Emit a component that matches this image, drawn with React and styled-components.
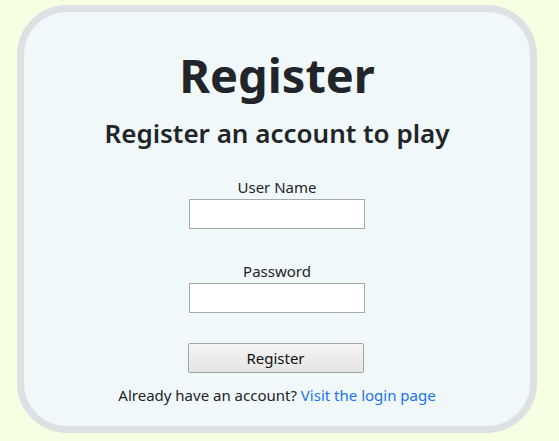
import styled, { createGlobalStyle } from "styled-components";

const GlobalStyle = createGlobalStyle`
  html, body {
    margin: 0;
    background: #f7ffe3;
    font-family: "Noto Sans", "Open Sans", sans-serif;
    color: #212529;
  }
`;

const App = () => {
  return (
    <Page>
      <GlobalStyle />
      <Card>
        <Title>Register</Title>
        <Subtitle>Register an account to play</Subtitle>
        <Form onSubmit={(e) => e.preventDefault()}>
          <Field>
            <Label htmlFor="username">User Name</Label>
            <Input id="username" type="text" />
          </Field>
          <Field>
            <Label htmlFor="password">Password</Label>
            <Input id="password" type="password" />
          </Field>
          <SubmitButton type="submit">Register</SubmitButton>
        </Form>
        <Footer>
          Already have an account? <LoginLink href="#">Visit the login page</LoginLink>
        </Footer>
      </Card>
    </Page>
  );
};

export default App;

const Page = styled.div`
  padding: 5px 22px 8px 17px;
`;

const Card = styled.div`
  box-sizing: border-box;
  width: 520px;
  height: 428px;
  border: 7px solid #dee0e4;
  border-radius: 50px;
  background: #f0f8fa;
  display: flex;
  flex-direction: column;
  align-items: center;
`;

const Title = styled.h1`
  margin: 35px 0 0;
  font-size: 47px;
  font-weight: 700;
  line-height: 56px;
`;

const Subtitle = styled.h2`
  margin: 12px 0 0;
  font-size: 26px;
  font-weight: 600;
  line-height: 36px;
`;

const Form = styled.form`
  margin-top: 24px;
  display: flex;
  flex-direction: column;
  align-items: center;
`;

const Field = styled.div`
  display: flex;
  flex-direction: column;
  align-items: center;
  margin-bottom: 30px;
`;

const Label = styled.label`
  font-size: 15px;
  line-height: 24px;
`;

const Input = styled.input`
  box-sizing: border-box;
  width: 176px;
  height: 30px;
  border: 1px solid #a9a9a9;
  background: #fff;
  margin: 0;
`;

const SubmitButton = styled.button`
  box-sizing: border-box;
  width: 176px;
  height: 30px;
  margin: 0 0 0 -3px;
  border: 1px solid #a3a3a3;
  border-radius: 2px;
  background: linear-gradient(#f5f5f5, #e4e4e4);
  font-family: "Noto Sans", sans-serif;
  font-size: 15px;
  color: #111;
`;

const Footer = styled.p`
  margin: 10px 0 0;
  font-size: 15px;
  line-height: 24px;
`;

const LoginLink = styled.a`
  color: #1a73f0;
  text-decoration: none;
`;
